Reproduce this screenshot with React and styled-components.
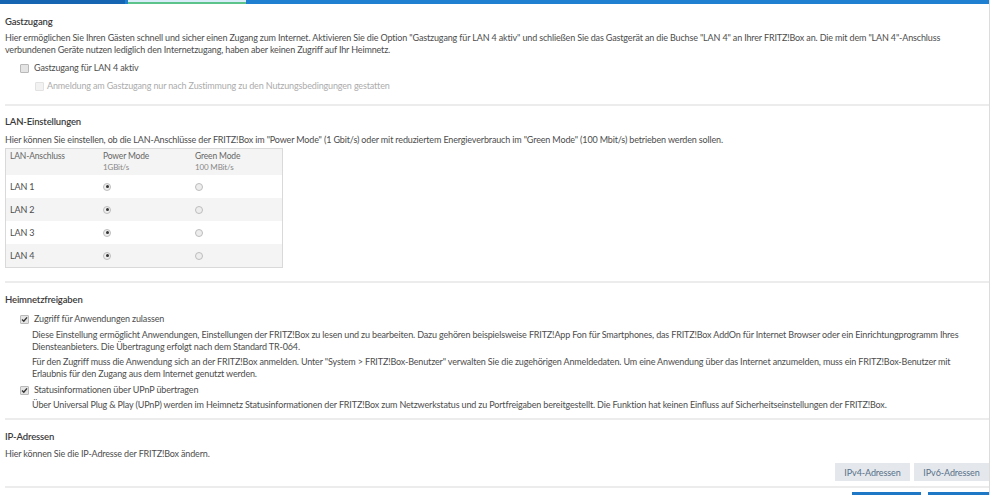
import React from 'react';
import styled, { createGlobalStyle } from 'styled-components';

const GlobalStyle = createGlobalStyle`
    html, body {
        margin: 0;
        padding: 0;
        background: #fff;
        overflow: hidden;
    }
    body {
        font-family: Lato, 'Open Sans', 'Liberation Sans', sans-serif;
        font-size: 9px;
        letter-spacing: -0.15px;
        color: #4d4d4d;
    }
`;

const Frame = styled.div`
    width: 990px;
    border-right: 1px solid #dcdcdc;
    min-height: 495px;
    box-sizing: border-box;
`;

const TopBar = styled.div`
    display: flex;
    height: 4px;
    background: #1f80d2;
`;

const TopDark = styled.div`
    width: 125px;
    background: #1565b3;
`;

const TopTab = styled.div`
    width: 118px;
    margin-left: 3px;
    background: #d9ecf7;
    border-bottom: 2px solid #5cc48a;
    box-sizing: border-box;
`;

const Content = styled.div`
    padding: 0 0 0 5px;
`;

const Section = styled.section`
    padding-top: ${(p) => p.top || 10}px;
    padding-bottom: ${(p) => p.bottom || 10}px;
    border-bottom: 2px solid #ececec;
`;

const Heading = styled.div`
    font-weight: 600;
    font-size: 9.5px;
    color: #3a3a3a;
    line-height: 12px;
`;

const Para = styled.div`
    line-height: ${(p) => p.lh || 12}px;
    margin-top: ${(p) => p.mt || 0}px;
    margin-left: ${(p) => p.indent || 0}px;
    white-space: nowrap;
`;

const CheckRow = styled.label`
    display: flex;
    align-items: center;
    gap: ${(p) => p.gap || 5}px;
    margin-left: ${(p) => p.indent || 15}px;
    margin-top: ${(p) => p.mt || 6}px;
    line-height: 12px;
    color: ${(p) => (p.disabled ? '#acacac' : '#4d4d4d')};
`;

const Box = styled.span`
    width: 7px;
    height: 7px;
    border: 1px solid ${(p) => (p.disabled ? '#e2e2e2' : '#b9b9b9')};
    background: ${(p) => (p.disabled ? '#f2f2f2' : '#e4e4e4')};
    border-radius: 1px;
    box-sizing: content-box;
    display: flex;
    align-items: center;
    justify-content: center;
    flex: none;
`;

const Checkbox = ({ checked, disabled }) => (
    <Box disabled={disabled}>
        {checked && (
            <svg width="7" height="7" viewBox="0 0 7 7">
                <path d="M1 3.6 L2.8 5.3 L6 1.4" fill="none" stroke="#333" strokeWidth="1.4" />
            </svg>
        )}
    </Box>
);

const Table = styled.div`
    margin-top: 2px;
    width: 278px;
    border: 1px solid #d9d9d9;
    box-sizing: border-box;
`;

const Row = styled.div`
    display: grid;
    grid-template-columns: 93px 92px 1fr;
    height: ${(p) => (p.head ? 26 : 23)}px;
    align-items: center;
    background: ${(p) => (p.shade ? '#f4f4f4' : '#fff')};
`;

const Cell = styled.div`
    padding-left: ${(p) => p.pl ?? 4}px;
    line-height: 11px;
    font-size: ${(p) => (p.head ? 8.5 : 9)}px;
    color: ${(p) => (p.head ? '#666' : '#4d4d4d')};
    display: flex;
    flex-direction: column;
`;

const Sub = styled.span`
    color: #888;
    font-size: 8px;
`;

const RadioDot = styled.span`
    width: 6px;
    height: 6px;
    border-radius: 50%;
    border: 1px solid #bdbdbd;
    background: #ededed;
    display: flex;
    align-items: center;
    justify-content: center;
    &::after {
        content: '';
        width: 3px;
        height: 3px;
        border-radius: 50%;
        background: ${(p) => (p.checked ? '#333' : 'transparent')};
    }
`;

const Buttons = styled.div`
    display: flex;
    justify-content: flex-end;
    gap: 4px;
    margin-top: 3px;
`;

const GrayButton = styled.button`
    width: 75px;
    height: 18px;
    border: none;
    background: #e4e8ec;
    color: #587089;
    font-family: inherit;
    font-size: 9px;
    letter-spacing: -0.1px;
    padding: 0;
`;

const BottomBar = styled.div`
    display: flex;
    justify-content: flex-end;
    gap: 7px;
    padding-top: 4px;
`;

const BlueButton = styled.button`
    width: ${(p) => p.w}px;
    height: 20px;
    border: none;
    background: #1e78c6;
`;

const lans = [
    { name: 'LAN 1', power: true },
    { name: 'LAN 2', power: true },
    { name: 'LAN 3', power: true },
    { name: 'LAN 4', power: true },
];

export default function App() {
    return (
        <Frame>
            <GlobalStyle />
            <TopBar>
                <TopDark />
                <TopTab />
            </TopBar>
            <Content>
                {/* Gastzugang */}
                <Section top={12} bottom={12}>
                    <Heading>Gastzugang</Heading>
                    <Para mt={4} lh={11.5}>
                        Hier ermöglichen Sie Ihren Gästen schnell und sicher einen Zugang zum Internet. Aktivieren Sie die Option "Gastzugang für LAN 4 aktiv" und schließen Sie das Gastgerät an die Buchse "LAN 4" an Ihrer FRITZ!Box an. Die mit dem "LAN 4"-Anschluss
                        <br />
                        verbundenen Geräte nutzen lediglich den Internetzugang, haben aber keinen Zugriff auf Ihr Heimnetz.
                    </Para>
                    <CheckRow mt={7}>
                        <Checkbox />
                        Gastzugang für LAN 4 aktiv
                    </CheckRow>
                    <CheckRow indent={30} gap={3} disabled>
                        <Checkbox disabled />
                        Anmeldung am Gastzugang nur nach Zustimmung zu den Nutzungsbedingungen gestatten
                    </CheckRow>
                </Section>

                {/* LAN-Einstellungen */}
                <Section top={10} bottom={13}>
                    <Heading>LAN-Einstellungen</Heading>
                    <Para mt={6}>
                        Hier können Sie einstellen, ob die LAN-Anschlüsse der FRITZ!Box im "Power Mode" (1 Gbit/s) oder mit reduziertem Energieverbrauch im "Green Mode" (100 Mbit/s) betrieben werden sollen.
                    </Para>
                    <Table>
                        <Row head shade>
                            <Cell head>LAN-Anschluss<Sub>&nbsp;</Sub></Cell>
                            <Cell head>Power Mode<Sub>1GBit/s</Sub></Cell>
                            <Cell head>Green Mode<Sub>100 MBit/s</Sub></Cell>
                        </Row>
                        {lans.map((lan, i) => (
                            <Row key={lan.name} shade={i % 2 === 1}>
                                <Cell>{lan.name}</Cell>
                                <Cell>
                                    <RadioDot checked={lan.power} />
                                </Cell>
                                <Cell>
                                    <RadioDot checked={!lan.power} />
                                </Cell>
                            </Row>
                        ))}
                    </Table>
                </Section>

                {/* Heimnetzfreigaben */}
                <Section top={11} bottom={7}>
                    <Heading>Heimnetzfreigaben</Heading>
                    <CheckRow mt={7}>
                        <Checkbox checked />
                        Zugriff für Anwendungen zulassen
                    </CheckRow>
                    <Para indent={27} mt={4}>
                        Diese Einstellung ermöglicht Anwendungen, Einstellungen der FRITZ!Box zu lesen und zu bearbeiten. Dazu gehören beispielsweise FRITZ!App Fon für Smartphones, das FRITZ!Box AddOn für Internet Browser oder ein Einrichtungprogramm Ihres
                        <br />
                        Diensteanbieters. Die Übertragung erfolgt nach dem Standard TR-064.
                    </Para>
                    <Para indent={27} mt={3}>
                        Für den Zugriff muss die Anwendung sich an der FRITZ!Box anmelden. Unter "System &gt; FRITZ!Box-Benutzer" verwalten Sie die zugehörigen Anmeldedaten. Um eine Anwendung über das Internet anzumelden, muss ein FRITZ!Box-Benutzer mit
                        <br />
                        Erlaubnis für den Zugang aus dem Internet genutzt werden.
                    </Para>
                    <CheckRow mt={4}>
                        <Checkbox checked />
                        Statusinformationen über UPnP übertragen
                    </CheckRow>
                    <Para indent={27} mt={3}>
                        Über Universal Plug &amp; Play (UPnP) werden im Heimnetz Statusinformationen der FRITZ!Box zum Netzwerkstatus und zu Portfreigaben bereitgestellt. Die Funktion hat keinen Einfluss auf Sicherheitseinstellungen der FRITZ!Box.
                    </Para>
                </Section>

                {/* IP-Adressen */}
                <Section top={11} bottom={5}>
                    <Heading>IP-Adressen</Heading>
                    <Para mt={5}>Hier können Sie die IP-Adresse der FRITZ!Box ändern.</Para>
                    <Buttons>
                        <GrayButton>IPv4-Adressen</GrayButton>
                        <GrayButton>IPv6-Adressen</GrayButton>
                    </Buttons>
                </Section>

                <BottomBar>
                    <BlueButton w={69} />
                    <BlueButton w={61} />
                </BottomBar>
            </Content>
        </Frame>
    );
}
